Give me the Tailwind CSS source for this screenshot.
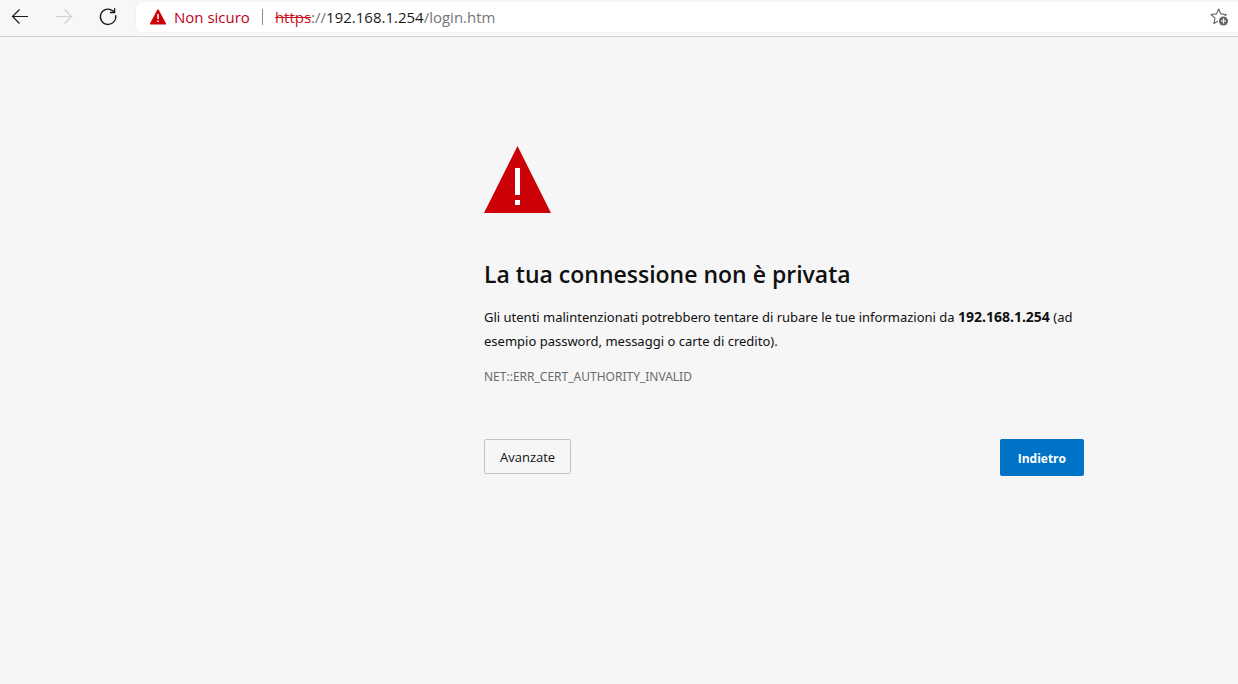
<!DOCTYPE html>
<html lang="it">
<head>
    <meta charset="UTF-8">
    <meta name="viewport" content="width=device-width, initial-scale=1.0">
    <title>Errore di privacy</title>
    <script src="https://cdn.jsdelivr.net/npm/@tailwindcss/browser@4"></script>
</head>
<body class="bg-[#f6f6f6] min-h-screen text-[#101010] font-['Open_Sans','Noto_Sans',sans-serif]">

<!-- Toolbar -->
<header class="flex items-center h-[37px] pb-[2px] border-b border-[#d0d0d0] bg-[#f7f7f7]">
    <nav class="flex items-center gap-6 pl-[10px] pr-[18px]">
        <button type="button" aria-label="Indietro nella cronologia" class="w-5 h-5">
            <svg viewBox="0 0 20 20" class="w-5 h-5" fill="none" stroke="#1a1a1a" stroke-width="1.2">
                <path d="M18 9.5H2.5M9.5 2.5l-7 7 7 7" />
            </svg>
        </button>
        <button type="button" aria-label="Avanti" disabled class="w-5 h-5">
            <svg viewBox="0 0 20 20" class="w-5 h-5" fill="none" stroke="#d0d0d0" stroke-width="1.2">
                <path d="M2 9.5h15.500M10.500 2.500l7 7-7 7" />
            </svg>
        </button>
        <button type="button" aria-label="Aggiorna" class="w-5 h-5">
            <svg viewBox="0 0 20 20" class="w-5 h-5" fill="none" stroke="#1a1a1a" stroke-width="1.3">
                <path d="M17.600 8.200A7.700 7.700 0 1 1 14.800 3.700L16.500 5.200M16.600 1.200V5.500H12" />
            </svg>
        </button>
    </nav>

    <div class="flex flex-1 items-center h-[30px] pl-[13px] pr-2 rounded-l-md bg-white text-[15px] shadow-[0_0_2px_#e4e4e4]">
        <svg viewBox="0 0 18 16" class="w-[18px] h-4 mr-[7px]">
            <path d="M9 1.200L16.300 14.800H1.700z" fill="#cc0007" stroke="#cc0007" stroke-width="1.600" stroke-linejoin="round" />
            <path d="M9 5v5M9 11.500v1.600" stroke="#fff" stroke-width="1.500" />
        </svg>
        <span class="text-[#c00018]">Non sicuro</span>
        <span class="w-px h-4 mx-[12px] bg-[#8a8a8a]"></span>
        <span class="flex-1 text-[#767676]"><span class="text-[#c8101a] line-through">https</span>://<span class="text-[#1a1a1a]">192.168.1.254</span>/login.htm</span>
        <button type="button" aria-label="Aggiungi ai preferiti" class="w-5 h-5">
            <svg viewBox="0 0 20 20" class="w-5 h-5">
                <path d="M8.700 2l2.200 4.900 5.500.6-4 3.700 1 5.300-4.700-2.700-4.800 2.800 1.100-5.400-4-3.700 5.400-.6z" fill="none" stroke="#666" stroke-width="1.100" stroke-linejoin="round" />
                <circle cx="13.500" cy="14" r="5.600" fill="#fff" />
                <circle cx="13.500" cy="14" r="4.600" fill="#666" />
                <path d="M11 14h5M13.500 11.500v5" stroke="#fff" stroke-width="1.200" />
            </svg>
        </button>
    </div>
</header>

<!-- Certificate warning -->
<main class="pl-[484px] pt-[109px]">
    <div class="w-full max-w-[600px]">
        <svg viewBox="0 0 67 67" class="w-[67px] h-[67px]">
            <path d="M33.500 0L67 67H0z" fill="#cc0007" />
            <path d="M31 22h5v27h-5zM31 54h5v5h-5z" fill="#fff" />
        </svg>
        <h1 class="mt-[45px] text-[23px] leading-8 font-[650]">La tua connessione non è privata</h1>
        <div class="font-['Noto_Sans','Open_Sans',sans-serif]">
            <p class="mt-[15px] text-[13px] leading-6">Gli utenti malintenzionati potrebbero tentare di rubare le tue informazioni da <strong class="text-sm leading-4">192.168.1.254</strong> (ad esempio password, messaggi o carte di credito).</p>
            <p class="mt-3 text-xs leading-6 text-[#6b6b6b]">NET::ERR_CERT_AUTHORITY_INVALID</p>
        </div>
        <div class="flex items-start justify-between mt-[50px]">
            <button type="button" class="h-[35px] px-[15px] pt-0.5 border border-[#c2c2c2] rounded-[2px] text-[13px]">Avanzate</button>
            <button type="button" class="h-[37px] px-[18px] pt-0.5 rounded-[2px] bg-[#0173c7] text-xs font-bold text-white">Indietro</button>
        </div>
    </div>
</main>

</body>
</html>
